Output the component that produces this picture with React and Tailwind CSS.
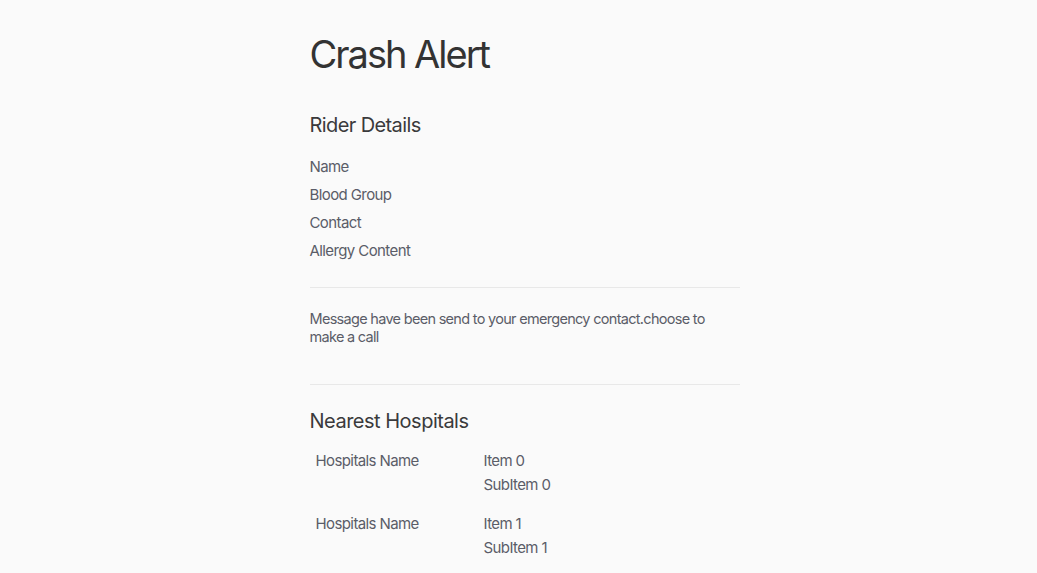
import React from "react";

const riderFields = ["Name", "Blood Group", "Contact", "Allergy Content"];

const hospitals = [
  { name: "Hospitals Name", item: "Item 0", sub: "SubItem 0" },
  { name: "Hospitals Name", item: "Item 1", sub: "SubItem 1" },
];

const App = () => {
  return (
    <div
      className="min-h-screen bg-[#fafafa] text-[#5a5d68]"
      style={{ fontFamily: "Inter, 'Noto Sans', sans-serif" }}
    >
      <div className="mx-auto w-[442px] pl-[12px] pt-[28px] pb-6">
        <h1 className="text-[38px] leading-[52px] tracking-[-2px] text-[#333333]">
          Crash Alert
        </h1>

        <h2 className="mt-[31px] text-[20px] leading-[28px] tracking-[-0.6px] text-[#3a3a3c]">
          Rider Details
        </h2>
        <div className="mt-[14px] flex flex-col">
          {riderFields.map((f) => (
            <div key={f} className="text-[15px] leading-[28px] tracking-[-0.6px]">
              {f}
            </div>
          ))}
        </div>

        <div className="mt-[22px] border-t border-[#e8e8e8]" />

        <p className="mt-[22px] max-w-[410px] text-[14.5px] leading-[18px] tracking-[-0.7px]">
          Message have been send to your emergency contact.choose to make a call
        </p>

        <div className="mt-[38px] border-t border-[#e8e8e8]" />

        <h2 className="mt-[22px] text-[20px] leading-[28px] tracking-[-0.5px] text-[#3a3a3c]">
          Nearest Hospitals
        </h2>

        <div className="mt-[14px] flex flex-col gap-[15px] pl-[6px]">
          {hospitals.map((h) => (
            <div key={h.item} className="flex text-[15px] leading-[24px] tracking-[-0.6px]">
              <div className="w-[168px]">{h.name}</div>
              <div className="flex flex-col">
                <span>{h.item}</span>
                <span>{h.sub}</span>
              </div>
            </div>
          ))}
        </div>
      </div>
    </div>
  );
};

export default App;
